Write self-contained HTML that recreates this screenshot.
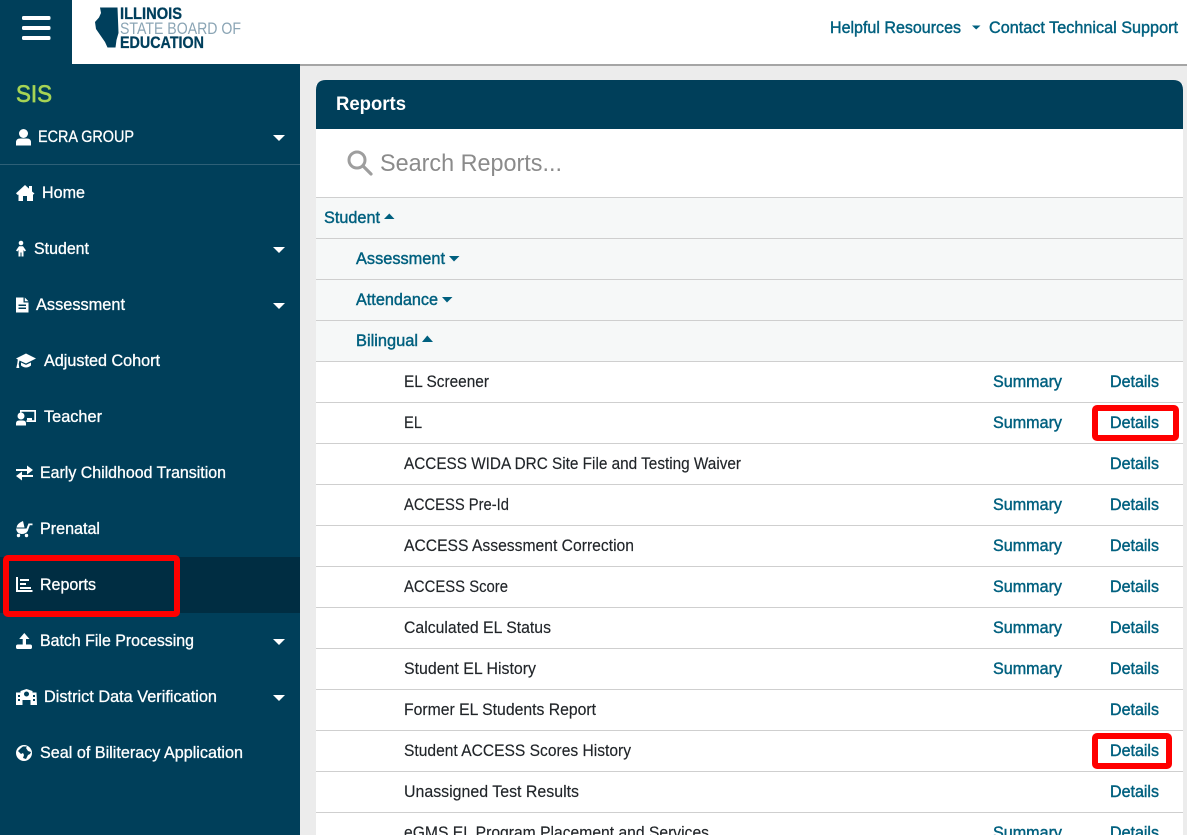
<!DOCTYPE html>
<html lang="en">
<head>
<meta charset="utf-8">
<title>Reports</title>
<style>
html,body{margin:0;padding:0;width:1187px;height:835px;overflow:hidden;background:#ececec}
svg{display:block}
text{font-family:"Liberation Sans",Arial,sans-serif;font-size:16.5px}
.n text,.n{fill:#fff}
.n text{stroke:#fff;stroke-width:.3px}
.l text{fill:#00607f;stroke:#00607f;stroke-width:.42px}
.d text{fill:#212529;stroke:#212529;stroke-width:.15px}
</style>
</head>
<body>
<svg width="1187" height="835" viewBox="0 0 1187 835" xmlns="http://www.w3.org/2000/svg">
<rect width="1187" height="835" fill="#ececec"/>
<!-- top bar -->
<rect x="0" y="64" width="1187" height="2" fill="#a5a5a5"/>
<rect x="72" y="0" width="1115" height="64" fill="#fff"/>
<rect x="0" y="0" width="72" height="64" fill="#003f5a"/>
<g fill="#fff"><rect x="22" y="16" width="28.5" height="4" rx="1.5"/><rect x="22" y="26" width="28.5" height="4" rx="1.5"/><rect x="22" y="36" width="28.5" height="4" rx="1.5"/></g>
<!-- logo -->
<path d="M100 7.500H117.500L118.500 33 116.500 40 115.500 47.500H107.500L105 42 96 29 95 22 99 17.500 101 13Z" fill="#003f5c"/>
<text x="120" y="19" textLength="62" lengthAdjust="spacingAndGlyphs" style="font-size:16.500px;font-weight:700;stroke:#003f5c;stroke-width:.3px" fill="#003f5c">ILLINOIS</text>
<text x="120" y="34" textLength="121" lengthAdjust="spacingAndGlyphs" style="font-size:16.500px" fill="#8ba5b5">STATE BOARD OF</text>
<text x="120" y="48" textLength="84" lengthAdjust="spacingAndGlyphs" style="font-size:16.500px;font-weight:700;stroke:#003f5c;stroke-width:.3px" fill="#003f5c">EDUCATION</text>
<g class="l">
<text x="830" y="33" textLength="131" lengthAdjust="spacingAndGlyphs">Helpful Resources</text>
<text x="989" y="33" textLength="189" lengthAdjust="spacingAndGlyphs">Contact Technical Support</text>
</g>
<path d="M972 25.500H980.500L976.200 29.500Z" fill="#00607f"/>
<!-- sidebar -->
<rect x="0" y="64" width="300" height="771" fill="#003f5a"/>
<rect x="0" y="557" width="300" height="56" fill="#002d42"/>
<rect x="0" y="164" width="300" height="1" fill="#2e6077"/>
<text x="16" y="102" textLength="36" lengthAdjust="spacingAndGlyphs" style="font-size:24px;stroke:#a6d455;stroke-width:.7px" fill="#a6d455">SIS</text>
<g class="n">
<text x="38" y="142" textLength="96" lengthAdjust="spacingAndGlyphs">ECRA GROUP</text>
<text x="42" y="198" textLength="43" lengthAdjust="spacingAndGlyphs">Home</text>
<text x="34" y="254" textLength="55" lengthAdjust="spacingAndGlyphs">Student</text>
<text x="36" y="310" textLength="89" lengthAdjust="spacingAndGlyphs">Assessment</text>
<text x="44" y="366" textLength="116" lengthAdjust="spacingAndGlyphs">Adjusted Cohort</text>
<text x="44" y="422" textLength="58" lengthAdjust="spacingAndGlyphs">Teacher</text>
<text x="40" y="478" textLength="186" lengthAdjust="spacingAndGlyphs">Early Childhood Transition</text>
<text x="40" y="534" textLength="60" lengthAdjust="spacingAndGlyphs">Prenatal</text>
<text x="40" y="590" textLength="56" lengthAdjust="spacingAndGlyphs">Reports</text>
<text x="40" y="646" textLength="154" lengthAdjust="spacingAndGlyphs">Batch File Processing</text>
<text x="44" y="702" textLength="173" lengthAdjust="spacingAndGlyphs">District Data Verification</text>
<text x="40" y="758" textLength="203" lengthAdjust="spacingAndGlyphs">Seal of Biliteracy Application</text>
</g>
<!-- sidebar carets and icons -->
<g fill="#fff">
<path d="M273 135H285L279 141Z"/><path d="M273 247H285L279 253Z"/><path d="M273 303H285L279 309Z"/><path d="M273 639H285L279 645Z"/><path d="M273 695H285L279 701Z"/>
<!-- user -->
<circle cx="23.500" cy="133.500" r="4.500"/><path d="M16 145.500V142.500Q16 138.500 20 138.500H27Q31 138.500 31 142.500V145.500Z"/>
<!-- home -->
<path d="M16 193.200 25 185 29 188.600V186H32V191.500L34.500 193.500 33 194.800V201H27V196H23V201H18.500V194.800H17.300Z"/>
<!-- student -->
<circle cx="21" cy="243" r="2.300"/><path d="M16 250.500 19 246.200H23L26 250.500 24.600 251.500 23.500 250V256.500H21.500V252.500H20.500V256.500H18.500V250L17.400 251.500Z"/>
<!-- document -->
<path fill-rule="evenodd" d="M16 297.500H23.500V302.500H28.500V312.500H16ZM18.500 304.500V306H26V304.500ZM18.500 307.500V309H26V307.500ZM24.800 297.500 28.500 301.200H24.800Z"/>
<!-- cap -->
<path d="M16 358.500 26 353.500 36 358.500 26 363.500 19.500 360.500 18.700 364 19.300 368H16.300L17.300 363.500 17.800 359.500Z"/><path d="M21 362.500 26 364.900 31 362.500V365.500Q26 369.500 21 365.500Z"/>
<!-- teacher -->
<circle cx="21" cy="416" r="3.500"/><path d="M16 425.500V423.500Q16 420.500 19 420.500H23Q26 420.500 26 423.500V425.500Z"/>
<path d="M20 410H36V422H26.500V420.300H34.300V411.700H21.500V412.500H20Z"/><rect x="27" y="418" width="5" height="2.300"/>
<!-- exchange -->
<path d="M16 469H27V465.500L33 470 27 474.500V471H16Z"/><path d="M33 475H22V471.500L16 476 22 480.500V477H33Z"/>
<!-- carriage -->
<path d="M23 521 24.500 527.500H16.500Q17 523.500 23 521Z"/><path d="M16 528.500H26.500L28.500 523.500H32.500V525.300H29.800L27.700 531Q26 534 21.500 534Q17 534 16 528.500Z"/><circle cx="18.500" cy="535.500" r="1.700"/><circle cx="26.500" cy="535.500" r="1.700"/>
<!-- chart -->
<path d="M16 577H18V590H32.500V592H16Z"/><rect x="20" y="579" width="9" height="2"/><rect x="20" y="583" width="6" height="2"/><rect x="20" y="587" width="11" height="2"/>
<!-- upload -->
<path d="M24.300 633 29.500 639H26V645H22.700V639H19.200Z"/><rect x="16" y="644.500" width="16" height="4.500" rx="1.800"/>
<!-- school -->
<path fill-rule="evenodd" d="M20.500 691 26.500 689 32.500 691V692.500H36.500L37 705H30.500V700H22.500V705H16V692.500H20.500ZM26.500 691.500A2.500 2.500 0 1 0 26.510 691.500ZM18 695V697H20V695ZM18 699V701H20V699ZM33 695V697H35V695ZM33 699V701H35V699Z"/>
<!-- globe -->
<path fill-rule="evenodd" d="M24 745A8 8 0 1 1 24 761 8 8 0 0 1 24 745ZM18 751 21 754 23 753 24 755 23 758 26 759 28 755 30 754 31 752 28 751 26 748 27 746.500 23 746.500 21 748Z"/>
</g>
<!-- panel -->
<rect x="316" y="84" width="867" height="751" fill="#fff"/>
<path d="M316 129V90Q316 80 326 80H1173Q1183 80 1183 90V129Z" fill="#003f5a"/>
<text x="336" y="110" textLength="70" lengthAdjust="spacingAndGlyphs" style="font-size:19px;font-weight:700" fill="#fff">Reports</text>
<!-- search -->
<circle cx="357" cy="160" r="8" fill="none" stroke="#9e9e9e" stroke-width="3"/>
<path d="M363 166 371 174" stroke="#9e9e9e" stroke-width="3.200" stroke-linecap="round"/>
<text x="380" y="171" textLength="182" lengthAdjust="spacingAndGlyphs" style="font-size:24.500px" fill="#8b8b8b">Search Reports...</text>
<!-- group rows -->
<rect x="316" y="197" width="867" height="164" fill="#f6f8f8"/>
<g fill="#cfcfcf">
<rect x="316" y="197" width="867" height="1"/><rect x="316" y="238" width="867" height="1"/><rect x="316" y="279" width="867" height="1"/><rect x="316" y="320" width="867" height="1"/><rect x="316" y="361" width="867" height="1"/><rect x="316" y="402" width="867" height="1"/><rect x="316" y="443" width="867" height="1"/><rect x="316" y="484" width="867" height="1"/><rect x="316" y="525" width="867" height="1"/><rect x="316" y="566" width="867" height="1"/><rect x="316" y="607" width="867" height="1"/><rect x="316" y="648" width="867" height="1"/><rect x="316" y="689" width="867" height="1"/><rect x="316" y="730" width="867" height="1"/><rect x="316" y="771" width="867" height="1"/><rect x="316" y="812" width="867" height="1"/>
</g>
<g class="l">
<text x="324" y="223" textLength="56" lengthAdjust="spacingAndGlyphs">Student</text>
<text x="356" y="264" textLength="89" lengthAdjust="spacingAndGlyphs">Assessment</text>
<text x="356" y="305" textLength="82" lengthAdjust="spacingAndGlyphs">Attendance</text>
<text x="356" y="346" textLength="62" lengthAdjust="spacingAndGlyphs">Bilingual</text>
</g>
<g fill="#00607f">
<path d="M384 219 389.300 213.500 394.500 219Z"/><path d="M449 256 454 261.500 459.500 256Z"/><path d="M442 297 447 302.500 452.500 297Z"/><path d="M422 342 427.300 335.500 433 342Z"/>
</g>
<g class="d">
<text x="404" y="387" textLength="85" lengthAdjust="spacingAndGlyphs">EL Screener</text>
<text x="404" y="428" textLength="18" lengthAdjust="spacingAndGlyphs">EL</text>
<text x="404" y="469" textLength="337" lengthAdjust="spacingAndGlyphs">ACCESS WIDA DRC Site File and Testing Waiver</text>
<text x="404" y="510" textLength="105" lengthAdjust="spacingAndGlyphs">ACCESS Pre-Id</text>
<text x="404" y="551" textLength="230" lengthAdjust="spacingAndGlyphs">ACCESS Assessment Correction</text>
<text x="404" y="592" textLength="104" lengthAdjust="spacingAndGlyphs">ACCESS Score</text>
<text x="404" y="633" textLength="147" lengthAdjust="spacingAndGlyphs">Calculated EL Status</text>
<text x="404" y="674" textLength="132" lengthAdjust="spacingAndGlyphs">Student EL History</text>
<text x="404" y="715" textLength="192" lengthAdjust="spacingAndGlyphs">Former EL Students Report</text>
<text x="404" y="756" textLength="227" lengthAdjust="spacingAndGlyphs">Student ACCESS Scores History</text>
<text x="404" y="797" textLength="175" lengthAdjust="spacingAndGlyphs">Unassigned Test Results</text>
<text x="404" y="838" textLength="305" lengthAdjust="spacingAndGlyphs">eGMS EL Program Placement and Services</text>
</g>
<g class="l">
<text x="993" y="387" textLength="69" lengthAdjust="spacingAndGlyphs">Summary</text>
<text x="993" y="428" textLength="69" lengthAdjust="spacingAndGlyphs">Summary</text>
<text x="993" y="510" textLength="69" lengthAdjust="spacingAndGlyphs">Summary</text>
<text x="993" y="551" textLength="69" lengthAdjust="spacingAndGlyphs">Summary</text>
<text x="993" y="592" textLength="69" lengthAdjust="spacingAndGlyphs">Summary</text>
<text x="993" y="633" textLength="69" lengthAdjust="spacingAndGlyphs">Summary</text>
<text x="993" y="674" textLength="69" lengthAdjust="spacingAndGlyphs">Summary</text>
<text x="993" y="838" textLength="69" lengthAdjust="spacingAndGlyphs">Summary</text>
<text x="1110" y="387" textLength="49" lengthAdjust="spacingAndGlyphs">Details</text>
<text x="1110" y="428" textLength="49" lengthAdjust="spacingAndGlyphs">Details</text>
<text x="1110" y="469" textLength="49" lengthAdjust="spacingAndGlyphs">Details</text>
<text x="1110" y="510" textLength="49" lengthAdjust="spacingAndGlyphs">Details</text>
<text x="1110" y="551" textLength="49" lengthAdjust="spacingAndGlyphs">Details</text>
<text x="1110" y="592" textLength="49" lengthAdjust="spacingAndGlyphs">Details</text>
<text x="1110" y="633" textLength="49" lengthAdjust="spacingAndGlyphs">Details</text>
<text x="1110" y="674" textLength="49" lengthAdjust="spacingAndGlyphs">Details</text>
<text x="1110" y="715" textLength="49" lengthAdjust="spacingAndGlyphs">Details</text>
<text x="1110" y="756" textLength="49" lengthAdjust="spacingAndGlyphs">Details</text>
<text x="1110" y="797" textLength="49" lengthAdjust="spacingAndGlyphs">Details</text>
<text x="1110" y="838" textLength="49" lengthAdjust="spacingAndGlyphs">Details</text>
</g>
<!-- red highlights -->
<g fill="none" stroke="#ff0000" stroke-width="6">
<rect x="6" y="558" width="171" height="56" rx="2"/>
<rect x="1095" y="408" width="81" height="30" rx="2"/>
<rect x="1095" y="736" width="74" height="30" rx="2"/>
</g>
</svg>
</body>
</html>
